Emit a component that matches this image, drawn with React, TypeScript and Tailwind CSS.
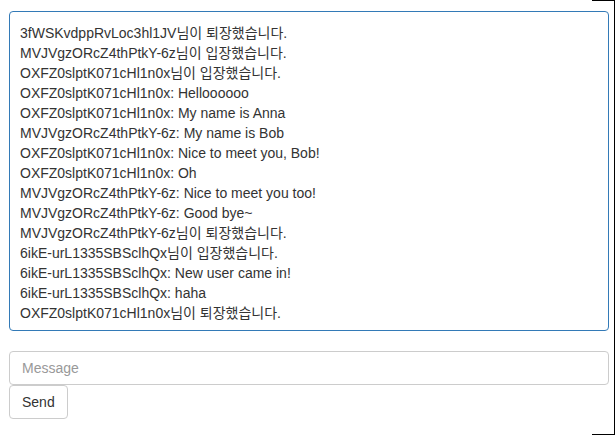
const messages: string[] = [
  "3fWSKvdppRvLoc3hl1JV님이 퇴장했습니다.",
  "MVJVgzORcZ4thPtkY-6z님이 입장했습니다.",
  "OXFZ0slptK071cHl1n0x님이 입장했습니다.",
  "OXFZ0slptK071cHl1n0x: Helloooooo",
  "OXFZ0slptK071cHl1n0x: My name is Anna",
  "MVJVgzORcZ4thPtkY-6z: My name is Bob",
  "OXFZ0slptK071cHl1n0x: Nice to meet you, Bob!",
  "OXFZ0slptK071cHl1n0x: Oh",
  "MVJVgzORcZ4thPtkY-6z: Nice to meet you too!",
  "MVJVgzORcZ4thPtkY-6z: Good bye~",
  "MVJVgzORcZ4thPtkY-6z님이 퇴장했습니다.",
  "6ikE-urL1335SBSclhQx님이 입장했습니다.",
  "6ikE-urL1335SBSclhQx: New user came in!",
  "6ikE-urL1335SBSclhQx: haha",
  "OXFZ0slptK071cHl1n0x님이 퇴장했습니다.",
];

export default function App() {
  return (
    <div className="relative w-[616px] h-[435px] bg-white text-[#333] text-[14px] leading-[20px] font-['Liberation_Sans','Noto_Sans_CJK_KR',sans-serif] overflow-hidden">
      <div className="pl-[9px] pt-[11px] w-[609px]">
        {/* chat log */}
        <div className="h-[320px] w-[600px] border border-[#337ab7] rounded-[4px] px-[10px] pt-[11px] overflow-hidden">
          {messages.map((m, i) => (
            <div key={i} className="whitespace-nowrap">
              {m}
            </div>
          ))}
        </div>

        <div className="mt-[20px] flex flex-col items-start">
          <input
            placeholder="Message"
            className="h-[34px] w-[600px] border border-[#ccc] rounded-[4px] px-[12px] py-[6px] placeholder:text-[#999] outline-none"
          />
          <button className="h-[34px] border border-[#ccc] rounded-[4px] px-[12px] bg-white text-[#333]">
            Send
          </button>
        </div>
      </div>

      {/* frame edge on the right */}
      <div className="absolute top-0 right-[1px] w-[23px] h-[435px] border-t border-r border-b border-black" />
    </div>
  );
}
